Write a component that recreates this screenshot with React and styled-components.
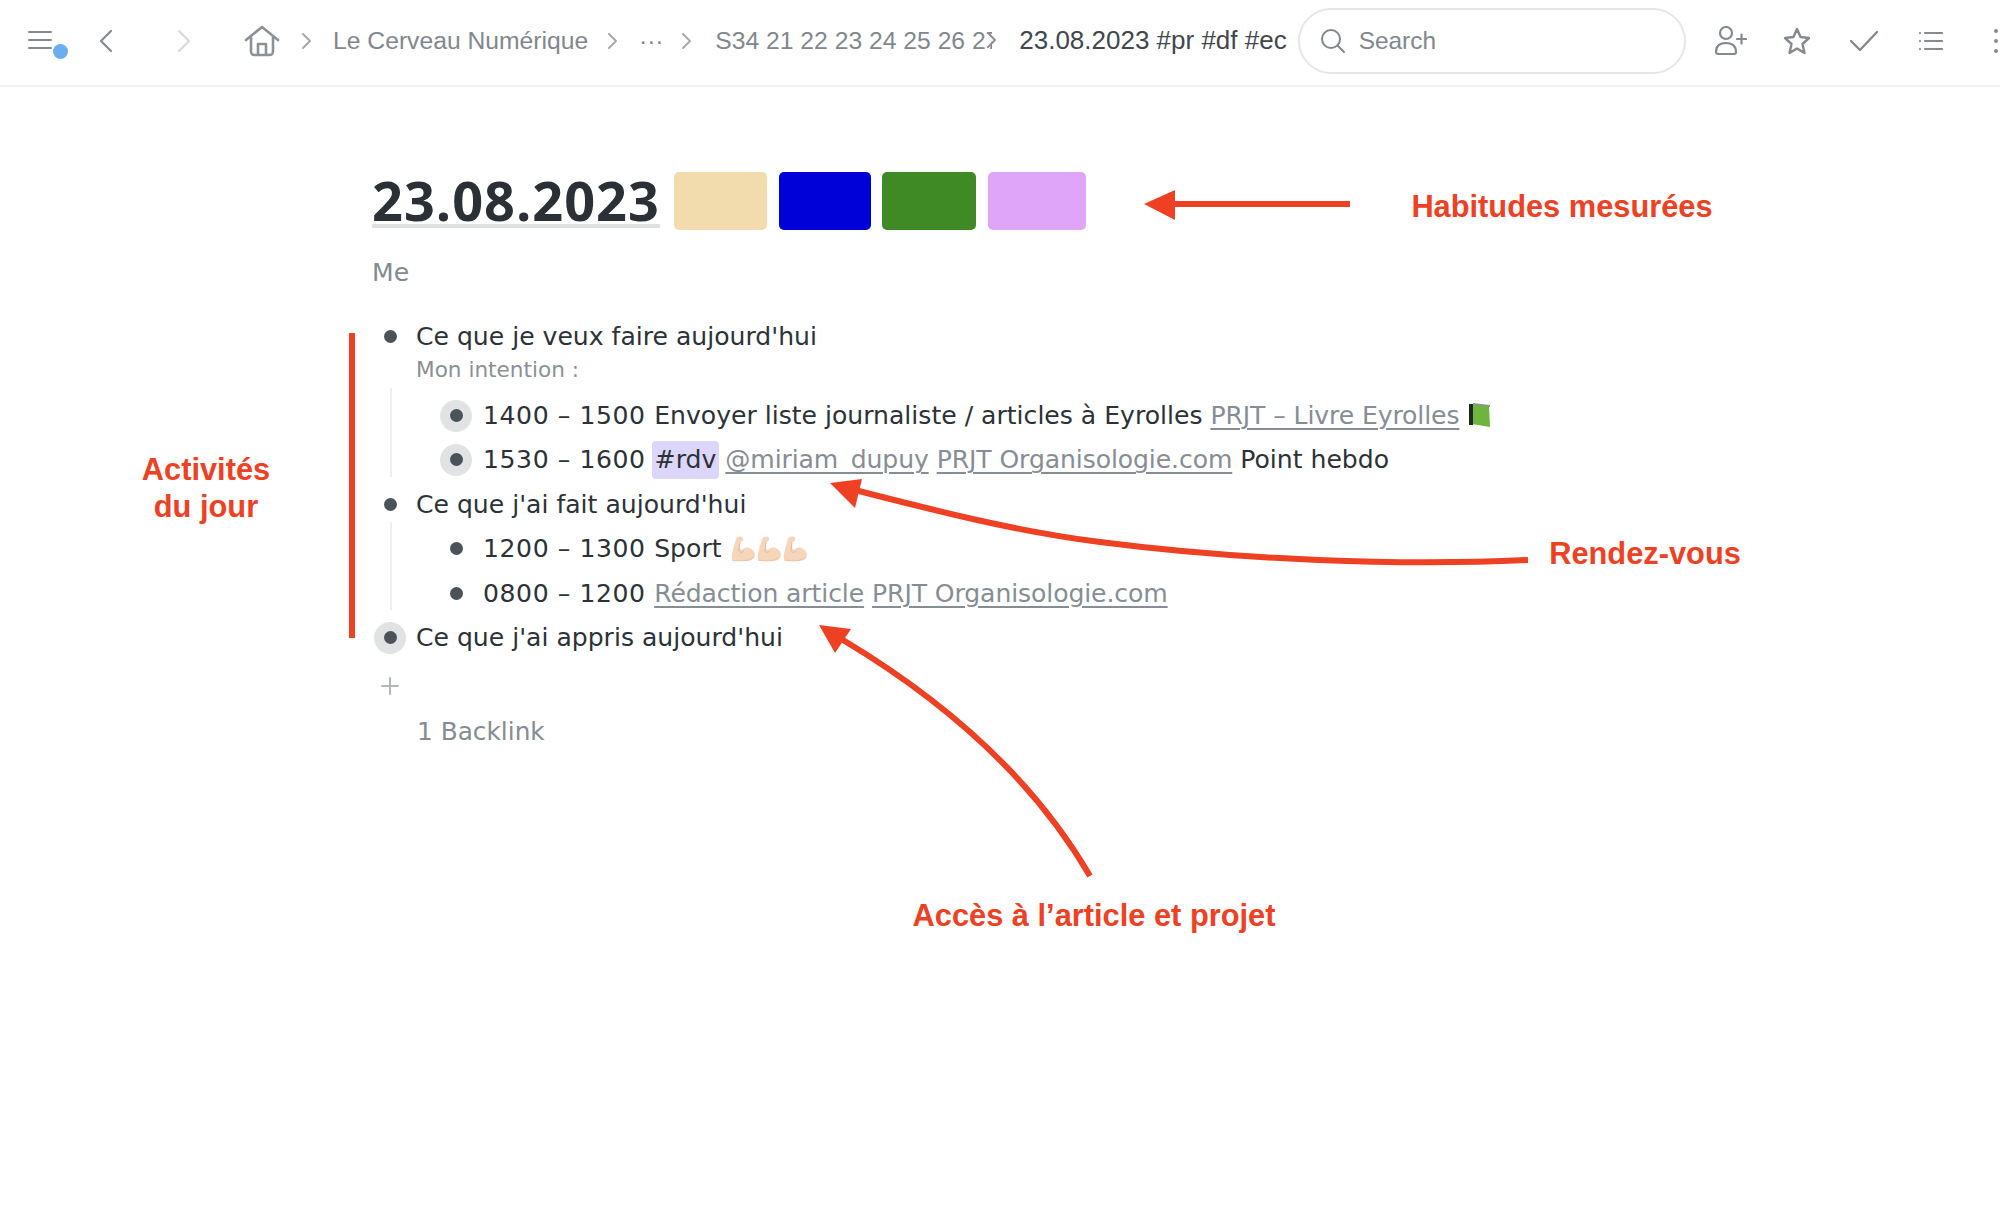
import React from 'react';
import styled, { createGlobalStyle } from 'styled-components';

const Global = createGlobalStyle`
  html, body { margin: 0; padding: 0; background: #fff; overflow: hidden; }
  body { width: 2000px; height: 1230px; font-family: "DejaVu Sans", "Liberation Sans", sans-serif; }
`;
const Page = styled.div`position: relative; width: 2000px; height: 1230px; overflow: hidden; background: #fff;`;
const Toolbar = styled.header`
  box-sizing: border-box; display: flex; align-items: center; height: 87px; padding-bottom: 4px; border-bottom: 2px solid #f2f2f3; white-space: nowrap;
  font-family: "Liberation Sans", Arial, sans-serif; font-size: 24.7px; color: #81878d;
`;
const Slot = styled.div`
  flex: none; display: flex; align-items: center; justify-content: center; position: relative;
  width: ${p => p.$w}px; margin-left: ${p => p.$ml || 0}px; color: ${p => p.$c || '#858a8f'};
`;
const Dot = styled.span`position: absolute; left: 25px; top: 13px; width: 15px; height: 15px; border-radius: 50%; background: #6aaef0;`;
const Crumb = styled.span`
  flex: none; margin-left: ${p => p.$ml || 0}px; width: ${p => p.$w ? `${p.$w}px` : 'auto'};
  overflow: hidden; color: #81878d; text-align: ${p => p.$center ? 'center' : 'left'};
`;
const CurrentCrumb = styled.span`flex: none; margin-left: 27px; color: #41474d; font-size: 26px;`;
const CrumbOverlay = styled.span`position: absolute; left: 985px; top: 31px; line-height: 0; color: #8c9196;`;
const SearchBox = styled.div`
  flex: none; box-sizing: border-box; width: 388px; height: 66px; margin-left: 11px; padding-left: 20px;
  display: flex; align-items: center; gap: 13px; border: 2px solid #e6e6e7; border-radius: 33px; color: #81878d; font-size: 24.4px;
`;
const Content = styled.main`padding: 85px 0 0 372px; color: #2c3237; font-size: 25.1px;`;
const TitleRow = styled.div`display: flex; align-items: flex-start;`;
const Title = styled.h1`
  margin: 0; height: 52px; width: 288px; box-sizing: content-box; border-bottom: 4px solid #dfe0e2;
  font: 700 54px/56px "Open Sans", sans-serif; letter-spacing: 1px; color: #2a3035; white-space: nowrap;
`;
const Habit = styled.span`
  flex: none; width: ${p => p.$w}px; height: 58px; margin-left: ${p => p.$ml}px; border-radius: 5px; background: ${p => p.$c};
`;
const Me = styled.div`margin-top: 28px; height: 30px; line-height: 30px; color: #83898f;`;
const Outline = styled.div`margin-top: 26px;`;
const Row = styled.div`display: flex; align-items: center; height: 44.4px; margin-left: 2px; white-space: nowrap;`;
const Bullet = styled.span`
  flex: none; width: 32px; height: 32px; margin-right: 10px; border-radius: 50%;
  display: flex; align-items: center; justify-content: center; background: ${p => p.$halo ? '#e1e2e4' : 'transparent'};
  &::after { content: ""; width: 13px; height: 13px; border-radius: 50%; background: #4b5258; }
`;
const Note = styled.div`margin: 0 0 11px 44px; height: 24px; line-height: 24px; font-size: 21.6px; color: #8a9096;`;
const Nested = styled.div`
  position: relative; padding-left: 66px;
  &::before { content: ""; position: absolute; left: 18px; top: -5px; bottom: 5px; width: 2px; background: #efeff0; }
  ${Bullet} { margin-right: 11px; }
`;
const Text = styled.span`white-space: pre;`;
const Time = styled.span`white-space: pre; letter-spacing: .58px;`;
const Link = styled.span`
  color: #868d94; text-decoration: underline; text-decoration-thickness: 2px; text-underline-offset: 4px;
  margin-left: ${p => p.$ml || 0}px; white-space: pre; display: inline-flex; align-items: center; letter-spacing: -.1px;
`;
const Tag = styled.span`
  display: inline-flex; align-items: center; height: 38px; margin: 0 6px; padding: 0 3px; border-radius: 4px; background: #dcd7fa;
`;
const Plus = styled.div`margin: 11px 0 0 2px; width: 32px; height: 30px; display: flex; align-items: center; justify-content: center; color: #b4b7ba;`;
const Backlink = styled.div`margin: 16px 0 0 45px; height: 30px; line-height: 30px; font-size: 24.8px; color: #868c92;`;
const Overlay = styled.svg`position: absolute; left: 0; top: 0; pointer-events: none;`;
const Label = styled.div`
  position: absolute; left: ${p => p.$x}px; top: ${p => p.$y}px; width: ${p => p.$w}px; text-align: center;
  font: 700 30.8px/37px "Liberation Sans", Arial, sans-serif; color: #ee4023; white-space: nowrap;
`;

const Ic = ({ w = 30, h = 30, sw = 2, children }) => (
  <svg width={w} height={h} viewBox={`0 0 ${w} ${h}`} fill="none" stroke="currentColor" strokeWidth={sw} strokeLinecap="round" strokeLinejoin="round">{children}</svg>
);
const Chev = () => <Ic w={12} h={18}><path d="M3 2 L10 9 L3 16" /></Ic>;
const Muscle = () => (
  <svg width="25" height="26" viewBox="0 0 25 26" style={{ marginRight: 1 }}>
    <path d="M6 3 C7 0 12 0 13 2 C14 4 12 6 10 6 L10 13 C11 14 12 14 13 13 C17 10 23 12 25 18 C25 22 22 25 18 25 L6 25 C2 25 1 22 2 18 C3 12 5 7 6 3 Z" fill="#f6d6bb" />
    <path d="M10 6 L9 14 C10 17 12 17 14 15" stroke="#eab891" strokeWidth="1" fill="none" />
    <path d="M2 24 C8 25 18 26 24 21" stroke="#f0c3a0" strokeWidth="1" fill="none" />
  </svg>
);
const Book = () => (
  <svg width="22" height="25" viewBox="0 0 22 25" style={{ marginLeft: 10 }}>
    <path d="M3 1 L20 3 L21 24 L3 21 Z" fill="#6eb53f" />
    <path d="M4 0 L21 2 L21 4 L4 2 Z" fill="#8a9a80" />
    <rect x="0" y="1" width="4" height="21" fill="#1d2a18" />
  </svg>
);

export default function App() {
  return (
    <Page>
      <Global />
      <Toolbar>
        <Slot $w={24} $ml={28}>
          <Ic w={24} h={20}><path d="M1 1 H23 M1 9 H23 M1 17 H23" /></Ic>
          <Dot />
        </Slot>
        <Slot $w={14} $ml={47}><Ic w={14} h={24} sw={2.2}><path d="M12 2 L2 12 L12 22" /></Ic></Slot>
        <Slot $w={14} $ml={64} $c="#d8dadc"><Ic w={14} h={24} sw={2.2}><path d="M2 2 L12 12 L2 22" /></Ic></Slot>
        <Slot $w={36} $ml={53} $c="#8c9196">
          <Ic w={36} h={32} sw={2.6}><path d="M2 15 L18 2 L34 15 M7 12 V26 C7 29 8 30 11 30 H25 C28 30 29 29 29 26 V12 M14 30 V19 H22 V30" /></Ic>
        </Slot>
        <Slot $w={12} $ml={20} $c="#a6a9ad"><Chev /></Slot>
        <Crumb $ml={21}>Le Cerveau Numérique</Crumb>
        <Slot $w={12} $ml={18} $c="#a6a9ad"><Chev /></Slot>
        <Crumb $ml={18} $w={30} $center>···</Crumb>
        <Slot $w={12} $ml={14} $c="#a6a9ad"><Chev /></Slot>
        <Crumb $ml={23} $w={277}>S34 21 22 23 24 25 26 27 28</Crumb>
        <CrumbOverlay><Chev /></CrumbOverlay>
        <CurrentCrumb>23.08.2023 #pr #df #ec</CurrentCrumb>
        <SearchBox>
          <Ic w={26} h={26}><circle cx="11" cy="11" r="9" /><path d="M17.5 17.5 L24 24" /></Ic>
          Search
        </SearchBox>
        <Slot $w={32} $ml={29}>
          <Ic w={32} h={30} sw={2.2}><circle cx="11" cy="7" r="6" /><path d="M1 26 C1 19 6 17 11 17 C16 17 21 19 21 26 C21 28 20 28 19 28 H3 C2 28 1 28 1 26 Z M22 13 H31 M26.500 8.500 V17.500" /></Ic>
        </Slot>
        <Slot $w={28} $ml={36}>
          <Ic w={28} h={28} sw={2.4}><path d="M14 2 L17.500 10 L26 11 L19.500 17 L21.500 26 L14 21.500 L6.500 26 L8.500 17 L2 11 L10.500 10 Z" /></Ic>
        </Slot>
        <Slot $w={28} $ml={39}><Ic w={28} h={20} sw={2.4}><path d="M1 10 L10 19 L27 1" /></Ic></Slot>
        <Slot $w={24} $ml={41}>
          <Ic w={24} h={20} sw={2.2}><path d="M6 2 H23 M6 10 H23 M6 18 H23 M1 2 V2.100 M1 10 V10.100 M1 18 V18.100" /></Ic>
        </Slot>
        <Slot $w={6} $ml={50}>
          <Ic w={6} h={26} sw={4}><path d="M3 3 V3.100 M3 13 V13.100 M3 23 V23.100" /></Ic>
        </Slot>
      </Toolbar>

      <Content>
        <TitleRow>
          <Title>23.08.2023</Title>
          <Habit $w={93} $ml={14} $c="#f2dcae" />
          <Habit $w={92} $ml={12} $c="#0000d8" />
          <Habit $w={94} $ml={11} $c="#3f8a25" />
          <Habit $w={98} $ml={12} $c="#dfa5f8" />
        </TitleRow>
        <Me>Me</Me>
        <Outline>
          <Row><Bullet /><Text>Ce que je veux faire aujourd'hui</Text></Row>
          <Note>Mon intention :</Note>
          <Nested>
            <Row>
              <Bullet $halo />
              <Time>1400 – 1500 </Time>
              <Text>Envoyer liste journaliste / articles à Eyrolles </Text>
              <Link>PRJT – Livre Eyrolles<Book /></Link>
            </Row>
            <Row>
              <Bullet $halo />
              <Time>1530 – 1600</Time>
              <Tag>#rdv</Tag>
              <Link>@miriam_dupuy</Link>
              <Link $ml={8}>PRJT Organisologie.com</Link>
              <Text> Point hebdo</Text>
            </Row>
          </Nested>
          <Row><Bullet /><Text>Ce que j'ai fait aujourd'hui</Text></Row>
          <Nested>
            <Row>
              <Bullet />
              <Time>1200 – 1300 </Time>
              <Text>Sport </Text>
              <Muscle /><Muscle /><Muscle />
            </Row>
            <Row>
              <Bullet />
              <Time>0800 – 1200 </Time>
              <Link>Rédaction article</Link>
              <Link $ml={8}>PRJT Organisologie.com</Link>
            </Row>
          </Nested>
          <Row><Bullet $halo /><Text>Ce que j'ai appris aujourd'hui</Text></Row>
        </Outline>
        <Plus><Ic w={20} h={20}><path d="M10 2 V18 M2 10 H18" /></Ic></Plus>
        <Backlink>1 Backlink</Backlink>
      </Content>

      <Overlay width="2000" height="1230" viewBox="0 0 2000 1230">
        <rect x="349" y="333" width="6" height="305" fill="#ee4023" />
        <path d="M1350 204 H1170" stroke="#ee4023" strokeWidth="6" fill="none" />
        <path d="M1144 204 L1175 190 L1175 220 Z" fill="#ee4023" />
        <path d="M1528 560 C1400 566 1240 560 1100 542 C1020 532 940 512 855 490" stroke="#ee4023" strokeWidth="6" fill="none" />
        <path d="M830 483 L862 479 L855 508 Z" fill="#ee4023" />
        <path d="M1090 876 C1040 790 960 710 843 640" stroke="#ee4023" strokeWidth="6" fill="none" />
        <path d="M819 625 L851 629 L835 653 Z" fill="#ee4023" />
      </Overlay>
      <Label $x={1362} $y={188} $w={400}>Habitudes mesurées</Label>
      <Label $x={106} $y={451} $w={200}>Activités<br />du jour</Label>
      <Label $x={1445} $y={535} $w={400}>Rendez-vous</Label>
      <Label $x={894} $y={897} $w={400}>Accès à l’article et projet</Label>
    </Page>
  );
}
